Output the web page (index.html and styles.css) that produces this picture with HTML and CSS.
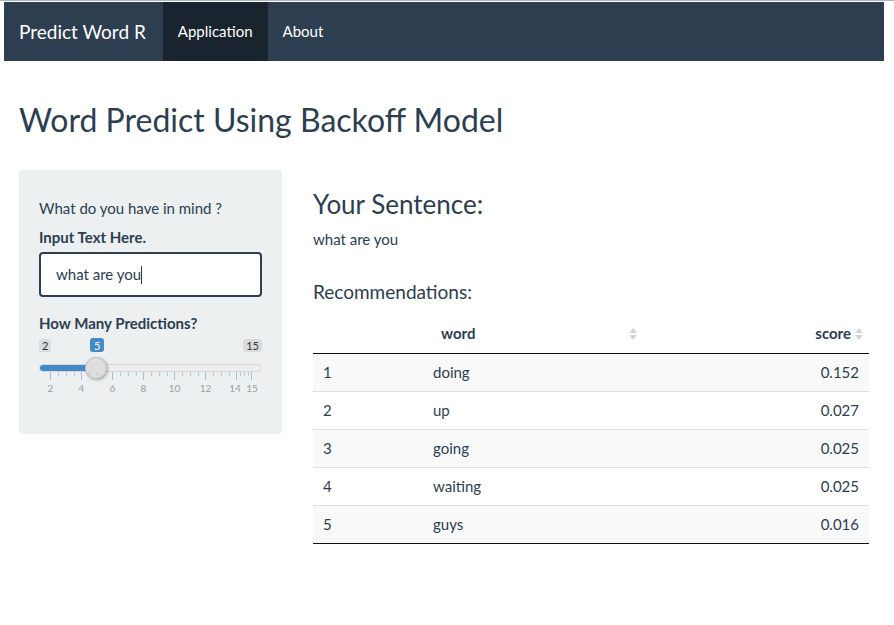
FILE: index.html
```html
<!DOCTYPE html>
<html>
<head>
<meta charset="utf-8">
<link rel="stylesheet" href="styles.css">
</head>
<body>
<div class="topline"></div>
<div class="page">
  <nav class="navbar">
    <span class="brand">Predict Word R</span>
    <a class="nav-link active">Application</a>
    <a class="nav-link">About</a>
  </nav>
  <div class="container">
    <h2 class="title">Word Predict Using Backoff Model</h2>
    <div class="layout">
      <div class="well">
        <p class="prompt">What do you have in mind ?</p>
        <label class="lbl">Input Text Here.</label>
        <div class="input">what are you<span class="caret"></span></div>
        <label class="lbl lbl2">How Many Predictions?</label>
        <div class="slider">
          <span class="tag tag-min">2</span>
          <span class="tag tag-val">5</span>
          <span class="tag tag-max">15</span>
          <div class="track"><div class="fill"></div></div>
          <div class="handle"></div>
          <svg class="grid" width="223" height="32" viewBox="0 0 223 32">
            <g stroke="#a8bfdc" stroke-width="1">
              <line x1="11.5" y1="0" x2="11.5" y2="8"/>
              <line x1="42.5" y1="0" x2="42.5" y2="8"/>
              <line x1="73.5" y1="0" x2="73.5" y2="8"/>
              <line x1="104.5" y1="0" x2="104.5" y2="8"/>
              <line x1="135.5" y1="0" x2="135.5" y2="8"/>
              <line x1="166.5" y1="0" x2="166.5" y2="8"/>
              <line x1="197.5" y1="0" x2="197.5" y2="8"/>
              <line x1="212.5" y1="0" x2="212.5" y2="8"/>
            </g>
            <g stroke="#c4c8cc" stroke-width="1">
              <line x1="19.5" y1="0" x2="19.5" y2="4"/><line x1="27.5" y1="0" x2="27.5" y2="4"/><line x1="35.5" y1="0" x2="35.5" y2="4"/>
              <line x1="50.5" y1="0" x2="50.5" y2="4"/><line x1="58.5" y1="0" x2="58.5" y2="4"/><line x1="66.5" y1="0" x2="66.5" y2="4"/>
              <line x1="81.5" y1="0" x2="81.5" y2="4"/><line x1="89.5" y1="0" x2="89.5" y2="4"/><line x1="97.5" y1="0" x2="97.5" y2="4"/>
              <line x1="112.5" y1="0" x2="112.5" y2="4"/><line x1="120.5" y1="0" x2="120.5" y2="4"/><line x1="128.5" y1="0" x2="128.5" y2="4"/>
              <line x1="143.5" y1="0" x2="143.5" y2="4"/><line x1="151.5" y1="0" x2="151.5" y2="4"/><line x1="159.5" y1="0" x2="159.5" y2="4"/>
              <line x1="174.5" y1="0" x2="174.5" y2="4"/><line x1="182.5" y1="0" x2="182.5" y2="4"/><line x1="190.5" y1="0" x2="190.5" y2="4"/>
              <line x1="201.5" y1="0" x2="201.5" y2="4"/><line x1="205.5" y1="0" x2="205.5" y2="4"/><line x1="209.5" y1="0" x2="209.5" y2="4"/>
            </g>
            <g fill="#9aa0a6" font-family="Lato, sans-serif" font-size="10" text-anchor="middle">
              <text x="11.5" y="20">2</text>
              <text x="42.5" y="20">4</text>
              <text x="73.5" y="20">6</text>
              <text x="104.5" y="20">8</text>
              <text x="135.5" y="20">10</text>
              <text x="166.5" y="20">12</text>
              <text x="196" y="20">14</text>
              <text x="213" y="20">15</text>
            </g>
          </svg>
        </div>
      </div>
      <div class="main">
        <h3 class="h3">Your Sentence:</h3>
        <p class="sentence">what are you</p>
        <h4 class="h4">Recommendations:</h4>
        <table class="dt">
          <colgroup><col class="c1"><col class="c2"><col class="c3"></colgroup>
          <thead>
            <tr>
              <th></th>
              <th class="sortable">word<span class="sort"></span></th>
              <th class="sortable right">score<span class="sort sort-r"></span></th>
            </tr>
          </thead>
          <tbody>
            <tr class="odd"><td>1</td><td>doing</td><td class="right">0.152</td></tr>
            <tr><td>2</td><td>up</td><td class="right">0.027</td></tr>
            <tr class="odd"><td>3</td><td>going</td><td class="right">0.025</td></tr>
            <tr><td>4</td><td>waiting</td><td class="right">0.025</td></tr>
            <tr class="odd"><td>5</td><td>guys</td><td class="right">0.016</td></tr>
          </tbody>
        </table>
      </div>
    </div>
  </div>
</div>
</body>
</html>
```
FILE: styles.css
```css
* { box-sizing: border-box; }
html, body { margin: 0; padding: 0; background: #fff; }
body {
  font-family: Lato, "Open Sans", sans-serif;
  font-size: 15px;
  line-height: 1.42857;
  color: #2c3e50;
}
.topline { height: 1px; background: #a9b6d3; }
.page { margin: 1px 10px 0 4px; }
.navbar {
  display: flex;
  align-items: stretch;
  height: 59px;
  background: #2c3e50;
}
.brand {
  padding: 0 17px 0 15px;
  font-size: 19px;
  line-height: 59px;
  color: #fff;
}
.nav-link {
  padding: 0 15px;
  line-height: 59px;
  font-size: 15px;
  color: #fff;
}
.nav-link.active { background: #1a242f; }
.container { padding: 0 15px; }
.title {
  margin: 41px 0 0;
  font-size: 32px;
  font-weight: 400;
  line-height: 1.1;
}
.layout {
  display: grid;
  grid-template-columns: 263px 1fr;
  column-gap: 31px;
  margin-top: 33px;
}
.well {
  background: #ecf0f1;
  border-radius: 4px;
  padding: 19px 20px;
  height: 264px;
}
.prompt { margin: 9px 0 7px; }
.lbl { display: block; font-weight: 700; margin-bottom: 4px; }
.lbl2 { margin-top: 16px; margin-bottom: 5px; }
.input {
  height: 45px;
  border: 2px solid #2c3e50;
  border-radius: 4px;
  background: #fff;
  padding: 0 15px;
  line-height: 41px;
}
.caret {
  display: inline-block;
  width: 1px;
  height: 18px;
  background: #2c3e50;
  vertical-align: -4px;
}
.slider { position: relative; height: 70px; margin-top: 2px; }
.tag {
  position: absolute;
  top: 0;
  font-size: 11px;
  line-height: 13px;
  padding: 0 3px;
  border-radius: 3px;
  background: #d9dcdf;
  color: #333;
}
.tag-min { left: 0; }
.tag-val { left: 51px; background: #428bca; color: #fff; padding: 1px 4px 0; top: -1px; }
.tag-max { right: 0; }
.track {
  position: absolute;
  left: 0; right: 0; top: 25px;
  height: 8px;
  border-radius: 4px;
  background: #eee;
  border: 1px solid #d6d6d6;
  overflow: hidden;
}
.fill { width: 57px; height: 100%; background: #428bca; }
.handle {
  position: absolute;
  left: 46px; top: 18px;
  width: 22px; height: 22px;
  border-radius: 50%;
  background: #dedede;
  border: 1px solid #c3c3c3;
  box-shadow: 1px 1px 3px rgba(0,0,0,0.3);
}
.grid { position: absolute; left: 0; top: 33px; }
.main { padding-top: 20px; }
.h3 { margin: 0; font-size: 26px; font-weight: 400; line-height: 1.1; }
.sentence { margin: 10px 0 0; }
.h4 { margin: 32px 0 0; font-size: 19px; font-weight: 400; line-height: 1.1; }
.dt {
  margin-top: 12px;
  width: 100%;
  border-collapse: collapse;
  table-layout: fixed;
}
.c1 { width: 110px; }
.c3 { width: 224px; }
.dt th {
  font-weight: 700;
  text-align: left;
  padding: 8px 18px;
  border-bottom: 1px solid #111;
  position: relative;
  height: 38px;
}
.dt th.right { text-align: right; padding-right: 18px; }
.dt td {
  padding: 2px 10px 0;
  height: 38px;
  border-top: 1px solid #ddd;
}
.dt tbody tr:first-child td { border-top: none; }
.dt tbody tr:last-child td { border-bottom: 1px solid #111; }
.dt tr.odd td { background: #f9f9f9; }
.dt td.right { text-align: right; }
.sort {
  position: absolute;
  right: 8px;
  top: 50%;
  margin-top: -7px;
  width: 8px;
  height: 14px;
}
.sort-r { right: 6px; }
.sort::before, .sort::after {
  content: "";
  position: absolute;
  left: 0;
  border-left: 4px solid transparent;
  border-right: 4px solid transparent;
}
.sort::before { top: 1px; border-bottom: 5px solid #d5d5d5; }
.sort::after { bottom: 1px; border-top: 5px solid #d5d5d5; }
```
